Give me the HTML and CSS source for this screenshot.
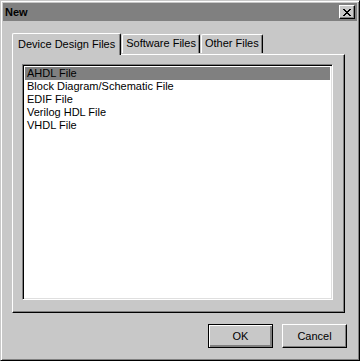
FILE: index.html
```html
<!DOCTYPE html>
<html lang="en">

<head>
    <meta charset="UTF-8">
    <title>New</title>
    <link rel="stylesheet" href="styles.css">
</head>

<body>

    <div class="window">
        <div class="titlebar">
            <span class="title">New</span>
            <button class="close-btn" title="Close">
                <svg width="8" height="7" viewBox="0 0 8 7" shape-rendering="crispEdges">
                    <path d="M0 0h2v1h-2zM6 0h2v1h-2zM1 1h2v1h-2zM5 1h2v1h-2zM2 2h4v1h-4zM3 3h2v1h-2zM2 4h4v1h-4zM1 5h2v1h-2zM5 5h2v1h-2zM0 6h2v1h-2zM6 6h2v1h-2z" fill="#000"/>
                </svg>
            </button>
        </div>

        <div class="body">
            <div class="tabs">
                <div class="tab active">Device Design Files</div>
                <div class="tab">Software Files</div>
                <div class="tab">Other Files</div>
            </div>

            <div class="panel">
                <ul class="listbox">
                    <li class="selected">AHDL File</li>
                    <li>Block Diagram/Schematic File</li>
                    <li>EDIF File</li>
                    <li>Verilog HDL File</li>
                    <li>VHDL File</li>
                </ul>
            </div>

            <div class="button-row">
                <button class="btn default">OK</button>
                <button class="btn">Cancel</button>
            </div>
        </div>
    </div>

</body>

</html>
```

FILE: styles.css
```css
body {
    margin: 0;
    padding: 0;
    font-family: 'Liberation Sans', Arial, sans-serif;
    font-size: 11px;
    color: #000;
    background-color: #c8c8c8;
}

.window {
    box-sizing: border-box;
    width: 360px;
    height: 361px;
    padding: 1px;
    background-color: #c8c8c8;
    border-top: 1px solid #c8c8c8;
    border-left: 1px solid #c8c8c8;
    border-right: 1px solid #000;
    border-bottom: 1px solid #000;
    box-shadow: inset 1px 1px #fff, inset -1px -1px #808080;
    display: flex;
    flex-direction: column;
}

.titlebar {
    margin: 1px 1px 0 1px;
    height: 18px;
    background-color: #808080;
    display: flex;
    align-items: center;
    justify-content: space-between;
    padding: 0 2px 0 2px;
}

.title {
    font-weight: bold;
    font-size: 11px;
    color: #000;
}

.close-btn {
    width: 16px;
    height: 14px;
    padding: 0;
    margin: 0;
    background-color: #c8c8c8;
    border-top: 1px solid #fff;
    border-left: 1px solid #fff;
    border-right: 1px solid #000;
    border-bottom: 1px solid #000;
    box-shadow: inset -1px -1px #808080;
    display: flex;
    align-items: center;
    justify-content: center;
}

.body {
    flex: 1;
    display: flex;
    flex-direction: column;
    padding: 12px 10px 0 10px;
}

.tabs {
    display: flex;
    align-items: flex-end;
    height: 21px;
}

.tab {
    box-sizing: border-box;
    height: 19px;
    line-height: 17px;
    padding: 0 3px;
    margin-bottom: 1px;
    background-color: #c8c8c8;
    border-top: 1px solid #fff;
    border-left: 1px solid #fff;
    border-right: 1px solid #000;
    border-radius: 2px 2px 0 0;
    box-shadow: inset -1px 0 #808080;
    white-space: nowrap;
}

.tab + .tab {
    margin-left: 1px;
}

.tab.active {
    position: relative;
    z-index: 1;
    height: 22px;
    line-height: 20px;
    margin-bottom: -1px;
    padding: 0 5px;
}

.panel {
    box-sizing: border-box;
    height: 259px;
    width: 333px;
    padding: 9px 11px 12px 9px;
    border-top: 1px solid #fff;
    border-left: 1px solid #fff;
    border-right: 1px solid #000;
    border-bottom: 1px solid #000;
    box-shadow: inset -1px -1px #808080;
    display: flex;
}

.listbox {
    flex: 1;
    margin: 0;
    padding: 2px;
    list-style: none;
    background-color: #fff;
    border-top: 1px solid #808080;
    border-left: 1px solid #808080;
    border-right: 1px solid #fff;
    border-bottom: 1px solid #fff;
    box-shadow: inset 1px 1px #000, inset -1px -1px #dfdfdf;
}

.listbox li {
    height: 13px;
    line-height: 13px;
    padding-left: 2px;
}

.listbox li.selected {
    background-color: #808080;
}

.button-row {
    display: flex;
    justify-content: flex-end;
    gap: 9px;
    padding: 11px 1px 0 0;
}

.btn {
    box-sizing: border-box;
    width: 65px;
    height: 24px;
    padding: 0;
    font-family: 'Liberation Sans', Arial, sans-serif;
    font-size: 11px;
    color: #000;
    background-color: #c8c8c8;
    border-top: 1px solid #fff;
    border-left: 1px solid #fff;
    border-right: 1px solid #000;
    border-bottom: 1px solid #000;
    box-shadow: inset -1px -1px #808080;
}

.btn.default {
    border: 1px solid #000;
    box-shadow: inset 1px 1px #fff, inset -2px -2px #808080;
}
```
